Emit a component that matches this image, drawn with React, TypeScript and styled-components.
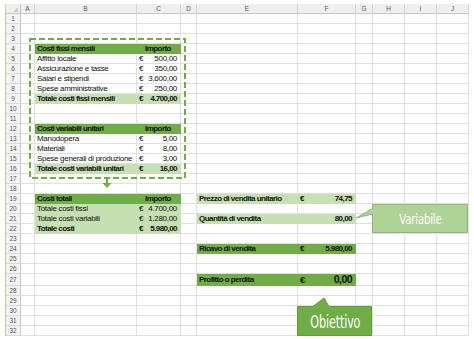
import React from 'react';
import styled, { createGlobalStyle } from 'styled-components';

const GlobalStyle = createGlobalStyle`
  html, body { margin: 0; padding: 0; background: #fff; }
  body { width: 474px; height: 339px; overflow: hidden; }
`;

const DARK = '#70ad47';
const LIGHT = '#c6e0b4';
const GRID = '#e0e0e0';

const COLS = [14, 102, 44, 16, 101, 58, 17, 32, 32, 32];
const LETTERS = ['A', 'B', 'C', 'D', 'E', 'F', 'G', 'H', 'I', 'J'];
const ROWS = Array.from({ length: 32 }, (_, i) => i + 1);
const rowHeight = (r: number) => (r === 27 ? 12 : 10);

type Tone = 'head' | 'total' | 'soft' | 'plain';

type Line = {
  row: number;
  col: number; // index of label column, value goes in col + 1
  tone: Tone;
  label: string;
  value?: string;
  euro?: boolean;
  bold?: boolean;
  big?: boolean;
};

const lines: Line[] = [
  { row: 4, col: 1, tone: 'head', label: 'Costi fissi mensili', value: 'Importo' },
  { row: 5, col: 1, tone: 'plain', label: 'Affitto locale', value: '500,00', euro: true },
  { row: 6, col: 1, tone: 'plain', label: 'Assicurazione e tasse', value: '350,00', euro: true },
  { row: 7, col: 1, tone: 'plain', label: 'Salari e stipendi', value: '3.600,00', euro: true },
  { row: 8, col: 1, tone: 'plain', label: 'Spese amministrative', value: '250,00', euro: true },
  { row: 9, col: 1, tone: 'total', label: 'Totale costi fissi mensili', value: '4.700,00', euro: true, bold: true },
  { row: 12, col: 1, tone: 'head', label: 'Costi variabili unitari', value: 'Importo' },
  { row: 13, col: 1, tone: 'plain', label: 'Manodopera', value: '5,00', euro: true },
  { row: 14, col: 1, tone: 'plain', label: 'Materiali', value: '8,00', euro: true },
  { row: 15, col: 1, tone: 'plain', label: 'Spese generali di produzione', value: '3,00', euro: true },
  { row: 16, col: 1, tone: 'total', label: 'Totale costi variabili unitari', value: '16,00', euro: true, bold: true },
  { row: 19, col: 1, tone: 'head', label: 'Costi totali', value: 'Importo' },
  { row: 20, col: 1, tone: 'soft', label: 'Totale costi fissi', value: '4.700,00', euro: true },
  { row: 21, col: 1, tone: 'soft', label: 'Totale costi variabili', value: '1.280,00', euro: true },
  { row: 22, col: 1, tone: 'soft', label: 'Totale costi', value: '5.980,00', euro: true, bold: true },
  { row: 19, col: 4, tone: 'soft', label: 'Prezzo di vendita unitario', value: '74,75', euro: true, bold: true },
  { row: 21, col: 4, tone: 'soft', label: 'Quantità di vendita', value: '80,00', bold: true },
  { row: 24, col: 4, tone: 'head', label: 'Ricavo di vendita', value: '5.980,00', euro: true },
  { row: 27, col: 4, tone: 'head', label: 'Profitto o perdita', value: '0,00', euro: true, big: true },
];

const fillOf = (tone: Tone) => (tone === 'head' ? DARK : tone === 'plain' ? '#fff' : LIGHT);

const Page = styled.div`
  position: relative;
  padding: 4px 0 0 5px;
  font-family: "Liberation Sans", Arial, sans-serif;
  color: #111;
`;

const Sheet = styled.div`
  display: grid;
  grid-template-columns: 15px ${COLS.map((w) => `${w}px`).join(' ')};
  grid-template-rows: 10px ${ROWS.map((r) => `${rowHeight(r)}px`).join(' ')};
  width: max-content;
  border-left: 1px solid #b9d5a6;
`;

const Corner = styled.div`
  box-sizing: border-box;
  position: relative;
  background: #efefef;
  border-right: 1px solid #c8c8c8;
  border-bottom: 1px solid #c8c8c8;
  &::after {
    content: '';
    position: absolute;
    right: 2px;
    bottom: 1px;
    border-left: 5px solid transparent;
    border-bottom: 5px solid #cfcfcf;
  }
`;

const ColHead = styled.div`
  box-sizing: border-box;
  background: #efefef;
  border-right: 1px solid #d4d4d4;
  border-bottom: 1px solid #c8c8c8;
  font-size: 6.5px;
  color: #555;
  display: flex;
  align-items: center;
  justify-content: center;
`;

const RowHead = styled.div`
  box-sizing: border-box;
  background: #f3f3f3;
  border-right: 1px solid #c8c8c8;
  border-bottom: 1px solid #dadada;
  font-size: 6.5px;
  color: #555;
  display: flex;
  align-items: center;
  justify-content: center;
`;

const Cell = styled.div<{ $fill: string; $bold?: boolean; $center?: boolean }>`
  box-sizing: border-box;
  background: ${(p) => p.$fill};
  border-right: 1px solid ${(p) => (p.$fill === '#fff' ? GRID : p.$fill)};
  border-bottom: 1px solid ${(p) => (p.$fill === '#fff' ? GRID : p.$fill)};
  font-size: 8px;
  font-weight: ${(p) => (p.$bold ? 700 : 400)};
  letter-spacing: ${(p) => (p.$bold ? '-0.55px' : '-0.3px')};
  white-space: nowrap;
  overflow: visible;
  display: flex;
  align-items: center;
  justify-content: ${(p) => (p.$center ? 'center' : 'space-between')};
  padding: 0 3px 0 2px;
  line-height: 1;
`;

const Amount = styled.span<{ $big?: boolean }>`
  font-size: ${(p) => (p.$big ? '10.5px' : '8px')};
`;

const Euro = styled.span<{ $big?: boolean }>`
  font-size: ${(p) => (p.$big ? '9.5px' : '8px')};
`;

const Overlay = styled.svg`
  position: absolute;
  left: 0;
  top: 0;
  pointer-events: none;
`;

const Callout = styled.div`
  position: absolute;
  display: flex;
  align-items: center;
  justify-content: center;
  color: #fff;
  font-family: "DejaVu Sans", sans-serif;
`;

const CalloutText = styled.span<{ $size: number; $squeeze: number }>`
  display: inline-block;
  font-size: ${(p) => p.$size}px;
  transform: scaleX(${(p) => p.$squeeze});
  white-space: nowrap;
  letter-spacing: -0.2px;
`;

const renderLine = (l: Line) => {
  const fill = fillOf(l.tone);
  const bold = l.tone === 'head' || l.tone === 'total' || l.bold;
  const isHeader = l.value === 'Importo';
  return [
    <Cell key={`${l.row}-${l.col}`} $fill={fill} $bold={bold} style={{ gridRow: l.row + 1, gridColumn: l.col + 2 }}>
      <span>{l.label}</span>
    </Cell>,
    <Cell
      key={`${l.row}-${l.col + 1}`}
      $fill={fill}
      $bold={bold}
      $center={isHeader}
      style={{ gridRow: l.row + 1, gridColumn: l.col + 3 }}
    >
      {isHeader ? (
        <span>{l.value}</span>
      ) : (
        <>
          <Euro $big={l.big}>{l.euro ? '€' : ''}</Euro>
          <Amount $big={l.big}>{l.value}</Amount>
        </>
      )}
    </Cell>,
  ];
};

export default function App() {
  const taken = new Set<string>();
  lines.forEach((l) => {
    taken.add(`${l.row}-${l.col}`);
    taken.add(`${l.row}-${l.col + 1}`);
  });

  return (
    <Page>
      <GlobalStyle />
      <Sheet>
        <Corner />
        {LETTERS.map((c) => (
          <ColHead key={c}>{c}</ColHead>
        ))}
        {ROWS.map((r) => (
          <React.Fragment key={r}>
            <RowHead style={{ gridRow: r + 1, gridColumn: 1 }}>{r}</RowHead>
            {COLS.map((_, c) =>
              taken.has(`${r}-${c}`) ? null : (
                <Cell key={c} $fill="#fff" style={{ gridRow: r + 1, gridColumn: c + 2 }} />
              )
            )}
          </React.Fragment>
        ))}
        {lines.flatMap(renderLine)}
      </Sheet>

      <Overlay width="474" height="339" viewBox="0 0 474 339">
        <rect x="30" y="39" width="155" height="139" fill="none" stroke={DARK} strokeWidth="2" strokeDasharray="6 3" />
        <line x1="107" y1="179" x2="107" y2="184" stroke={DARK} strokeWidth="2" />
        <polygon points="102.5,183 111.5,183 107,188" fill={DARK} />
        <path d="M372.5 204.5 H467.5 V232.5 H372.5 V214 L356 218 L372.5 208.5 Z" fill="#afd396" stroke="#93b27f" strokeWidth="1" />
        <path d="M297.5 306.5 H313 L324 298 L329 306.5 H371.5 V335.5 H297.5 Z" fill={DARK} stroke="#5f9a3b" strokeWidth="1" />
      </Overlay>

      <Callout style={{ left: 373, top: 205, width: 95, height: 28 }}>
        <CalloutText $size={14} $squeeze={0.72}>Variabile</CalloutText>
      </Callout>
      <Callout style={{ left: 298, top: 307, width: 74, height: 29 }}>
        <CalloutText $size={18} $squeeze={0.62}>Obiettivo</CalloutText>
      </Callout>
    </Page>
  );
}
